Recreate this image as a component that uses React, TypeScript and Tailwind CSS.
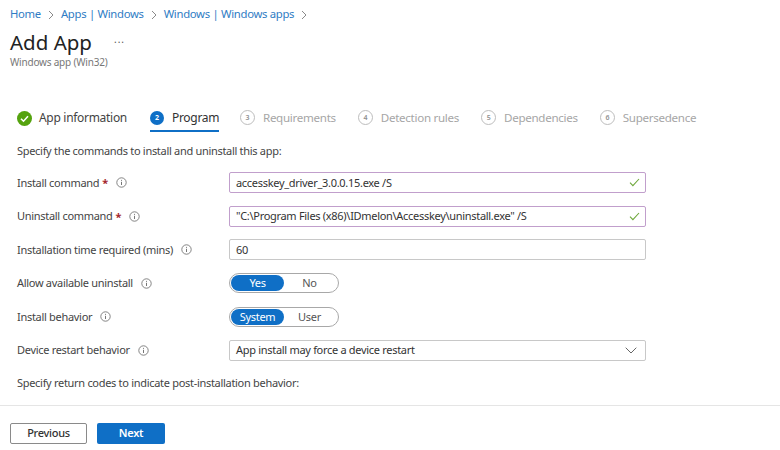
import React from "react";

function Info() {
  return (
    <svg width="11" height="11" viewBox="0 0 11 11" fill="none" className="shrink-0">
      <circle cx="5.5" cy="5.5" r="4.7" stroke="#666" strokeWidth="0.8" />
      <path d="M5.5 4.8V8" stroke="#666" strokeWidth="0.9" />
      <circle cx="5.5" cy="3.3" r="0.55" fill="#666" />
    </svg>
  );
}

function Check() {
  return (
    <svg width="11" height="9" viewBox="0 0 11 9" fill="none" className="shrink-0">
      <path d="M1 4.6L3.9 7.6L10 1" stroke="#6fa83c" strokeWidth="1.1" />
    </svg>
  );
}

function Chevron() {
  return (
    <svg width="6" height="10" viewBox="0 0 6 10" fill="none" className="shrink-0">
      <path d="M1 1L5 5L1 9" stroke="#8a8a8a" strokeWidth="1" />
    </svg>
  );
}

function Step({ n, label }: { n: string; label: string }) {
  return (
    <div className="flex items-center gap-[8px] text-[11.6px] text-[#a6a6a6]">
      <span className="flex h-[15px] w-[15px] items-center justify-center rounded-full border border-[#bdbdbd] text-[7px] font-semibold text-[#8f8f8f]">
        {n}
      </span>
      <span>{label}</span>
    </div>
  );
}

function Row({ label, req, children }: { label: string; req?: boolean; children: React.ReactNode }) {
  return (
    <div className="flex h-[33.5px] items-center">
      <div className="flex w-[212px] shrink-0 items-center text-[11px] text-[#444]">
        <span>{label}</span>
        {req && <span className="ml-[3px] text-[11px] font-bold leading-none text-[#a4262c]">*</span>}
        <span className="ml-[8px] flex"><Info /></span>
      </div>
      {children}
    </div>
  );
}

function Field({ value, valid }: { value: string; valid?: boolean }) {
  return (
    <div
      className={
        "flex h-[21px] w-[417px] items-center justify-between rounded-[2px] border pl-[6px] pr-[5px] text-[11px] text-[#333] " +
        (valid ? "border-[#c19fcc]" : "border-[#c8c8c8]")
      }
    >
      <span>{value}</span>
      {valid && <Check />}
    </div>
  );
}

function Toggle({ a, b }: { a: string; b: string }) {
  return (
    <div className="flex h-[20px] w-[110px] items-center rounded-full border border-[#a8a8a8] p-[1px] text-[11px]">
      <span className="flex h-[16px] w-[53px] items-center justify-center rounded-full bg-[#0f6fc6] text-white">{a}</span>
      <span className="flex flex-1 items-center justify-center pr-[2px] text-[#555]">{b}</span>
    </div>
  );
}

export default function App() {
  return (
    <div
      className="flex h-[450px] w-[780px] flex-col overflow-hidden bg-white tracking-[-0.3px]"
      style={{ fontFamily: '"Noto Sans", "Open Sans", sans-serif' }}
    >
      <div className="flex h-[29px] items-center gap-[7px] pl-[10px] text-[11.3px] text-[#2f7cc4]">
        <span>Home</span>
        <Chevron />
        <span>Apps | Windows</span>
        <Chevron />
        <span>Windows | Windows apps</span>
        <Chevron />
      </div>
      <div className="flex h-[26px] items-center pl-[10px] tracking-normal">
        <span className="text-[20.5px] leading-none text-[#222]">Add App</span>
        <span className="ml-[22px] -mt-[6px] text-[10px] leading-none tracking-[1px] text-[#555]">...</span>
      </div>
      <div className="h-[14px] pl-[10px] text-[10px] leading-[14px] tracking-[-0.2px] text-[#777]">Windows app (Win32)</div>

      <div className="mt-[38px] flex h-[34px] items-start pl-[17px]">
        <div className="flex h-[22px] items-center gap-[7px] text-[12px] text-[#444]">
          <svg width="15" height="15" viewBox="0 0 15 15">
            <circle cx="7.5" cy="7.5" r="7.5" fill="#55a30f" />
            <path d="M4 7.7L6.5 10.2L11 5.3" stroke="white" strokeWidth="1.6" fill="none" />
          </svg>
          <span>App information</span>
        </div>
        <div className="ml-[23px] flex h-[25px] w-[69px] items-start justify-between border-b-2 border-[#0f6fc6] text-[12px] text-[#333]">
          <div className="flex h-[22px] items-center gap-[8px]">
            <span className="flex h-[14px] w-[14px] items-center justify-center rounded-full bg-[#0f6fc6] text-[7px] font-bold text-white">2</span>
            <span>Program</span>
          </div>
        </div>
        <div className="ml-[21px] flex h-[22px] items-center gap-[22px]">
          <Step n="3" label="Requirements" />
          <Step n="4" label="Detection rules" />
          <Step n="5" label="Dependencies" />
          <Step n="6" label="Supersedence" />
        </div>
      </div>

      <div className="flex h-[20px] items-center pl-[17px] text-[11px] text-[#444]">
        Specify the commands to install and uninstall this app:
      </div>

      <div className="mt-[5px] flex flex-col pl-[17px]">
        <Row label="Install command" req><Field value="accesskey_driver_3.0.0.15.exe /S" valid /></Row>
        <Row label="Uninstall command" req><Field value={'"C:\\Program Files (x86)\\IDmelon\\Accesskey\\uninstall.exe" /S'} valid /></Row>
        <Row label="Installation time required (mins)"><Field value="60" /></Row>
        <Row label="Allow available uninstall"><Toggle a="Yes" b="No" /></Row>
        <Row label="Install behavior"><Toggle a="System" b="User" /></Row>
        <Row label="Device restart behavior">
          <div className="flex h-[21px] w-[417px] items-center justify-between rounded-[2px] border border-[#c8c8c8] pl-[6px] pr-[8px] text-[11px] text-[#333]">
            <span>App install may force a device restart</span>
            <svg width="12" height="7" viewBox="0 0 12 7" fill="none"><path d="M0.7 0.7L6 6L11.3 0.7" stroke="#666" strokeWidth="1" /></svg>
          </div>
        </Row>
      </div>

      <div className="flex h-[33px] items-center pl-[17px] text-[11px] text-[#444]">
        Specify return codes to indicate post-installation behavior:
      </div>

      <div className="mt-[5px] flex flex-1 gap-[10px] border-t border-[#e5e5e5] pl-[10px] pt-[17px]">
        <button className="h-[21px] w-[77px] rounded-[2px] border border-[#8a8a8a] text-[11px] font-medium text-[#333]">Previous</button>
        <button className="h-[21px] w-[68px] rounded-[2px] bg-[#0f6fc6] text-[11px] font-semibold text-white">Next</button>
      </div>
    </div>
  );
}
